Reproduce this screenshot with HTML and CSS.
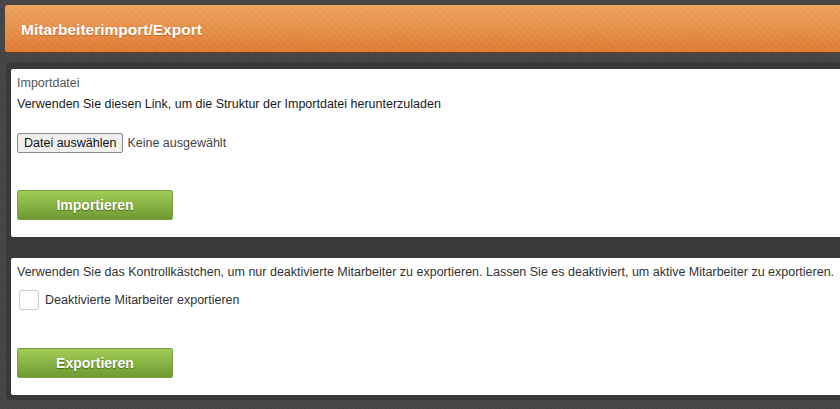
FILE: index.html
```html
<!DOCTYPE html>
<html>
<head>
    <title>Mitarbeiterimport/Export</title>
    <link rel="stylesheet" href="styles.css">
</head>
<body>
    <div class="page-header">
        <h1>Mitarbeiterimport/Export</h1>
    </div>

    <div class="content">
        <div class="panel import-panel">
            <div class="caption">Importdatei</div>
            <p class="hint">Verwenden Sie diesen Link, um die Struktur der Importdatei herunterzuladen</p>
            <div class="file-row">
                <span class="file-btn">Datei auswählen</span>
                <span class="file-name">Keine ausgewählt</span>
            </div>
            <button class="green-btn">Importieren</button>
        </div>

        <div class="panel export-panel">
            <p class="hint">Verwenden Sie das Kontrollkästchen, um nur deaktivierte Mitarbeiter zu exportieren. Lassen Sie es deaktiviert, um aktive Mitarbeiter zu exportieren.</p>
            <label class="check-row">
                <span class="check-box"></span>
                Deaktivierte Mitarbeiter exportieren
            </label>
            <button class="green-btn">Exportieren</button>
        </div>
    </div>
</body>
</html>
```

FILE: styles.css
```css
body {
    margin: 0;
    padding: 5px 0 0 5px;
    width: 900px;
    overflow: hidden;
    background-color: #484848;
    background-image: repeating-linear-gradient(45deg, rgba(0,0,0,0.08) 0, rgba(0,0,0,0.08) 1px, transparent 1px, transparent 3px);
    font-family: "Liberation Sans", Arial, sans-serif;
    font-size: 12.5px;
    color: #222;
}

.page-header {
    height: 47px;
    border-radius: 3px 0 0 3px;
    border-bottom: 1px solid #6b4020;
    background: repeating-linear-gradient(45deg, rgba(255,255,255,0.05) 0, rgba(255,255,255,0.05) 2px, transparent 2px, transparent 5px),
        linear-gradient(to bottom, #eca25d, #df7a32);
    display: flex;
    align-items: center;
    padding-left: 16px;
}

.page-header h1 {
    margin: 2px 0 0;
    font-size: 15.5px;
    font-weight: bold;
    color: #fff;
    text-shadow: 0 1px 1px rgba(120,60,10,0.4);
}

.content {
    margin: 9px 0 0 1px;
    padding: 7px 0 5px 3px;
    background: #393939;
    border-radius: 4px 0 0 4px;
    display: flex;
    flex-direction: column;
    gap: 21px;
}

.panel {
    background: #fff;
    border-radius: 2px 0 0 2px;
    margin-left: 2px;
    padding: 6px 6px 0 6px;
}

.import-panel {
    height: 162px;
}

.export-panel {
    height: 131px;
}

.caption {
    color: #555;
    line-height: 16px;
}

.hint {
    margin: 5px 0 0;
    line-height: 16px;
    color: #1a1a1a;
}

.export-panel .hint {
    margin-top: 0;
    color: #333;
}

.file-row {
    margin-top: 21px;
    display: flex;
    align-items: center;
}

.file-btn {
    display: inline-block;
    height: 18px;
    line-height: 18px;
    padding: 0 6px;
    border: 1px solid #8a8a8a;
    border-radius: 2px;
    background: #efefef;
    color: #111;
}

.file-name {
    margin-left: 4px;
    color: #444;
}

.green-btn {
    display: block;
    width: 156px;
    height: 30px;
    border: 1px solid #7a9c44;
    border-radius: 2px;
    background: linear-gradient(to bottom, #a2cc57, #6e9a32);
    color: #fff;
    font-family: "Liberation Sans", Arial, sans-serif;
    font-size: 14px;
    font-weight: bold;
    text-shadow: 0 1px 1px rgba(40,60,10,0.6);
    padding: 0;
}

.import-panel .green-btn {
    margin-top: 37px;
}

.export-panel .green-btn {
    margin-top: 38px;
}

.check-row {
    display: flex;
    align-items: center;
    margin-top: 10px;
    color: #333;
}

.check-box {
    display: inline-block;
    width: 18px;
    height: 18px;
    margin: 0 6px 0 2px;
    border: 1px solid #ccc;
    border-radius: 3px;
    background: #fff;
}
```
